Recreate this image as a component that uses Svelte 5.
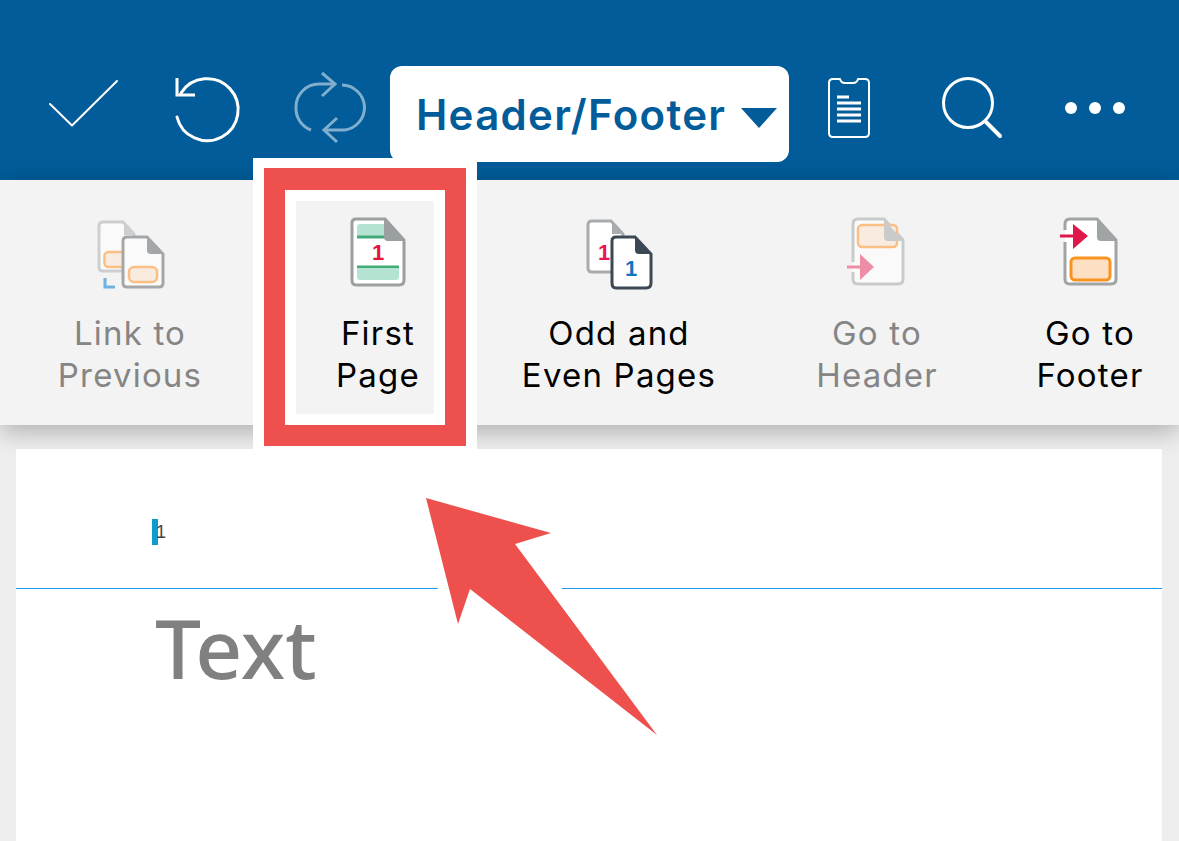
<script>
  const blue = '#015c99';
</script>

<div class="page">
  <header class="top">
    <div class="row">
      <div class="slot">
        <svg viewBox="45 76 78 66" width="78" height="66"><path d="M50 110 L72 131.5 L117 87" class="ln2" /></svg>
      </div>
      <div class="slot">
        <svg viewBox="168 70 78 76" width="78" height="76">
          <path d="M177 117 A31 31 0 1 0 181 93" class="ln3" />
          <path d="M177 78 V95 H195" class="ln3 butt" />
        </svg>
      </div>
      <div class="slot dim">
        <svg viewBox="291 70 78 76" width="78" height="76">
          <path d="M335 84 H319 A23 23 0 0 0 296 107 A23 23 0 0 0 311 130" class="ln3 butt" />
          <path d="M322 73 L335 84 L322 96" class="ln3 butt" />
          <path d="M342 85 A23 23 0 0 1 364.500 107 A23 23 0 0 1 345 130 H324" class="ln3 butt" />
          <path d="M337 118 L324 130 L337 142" class="ln3 butt" />
        </svg>
      </div>
      <button class="drop">
        <span>Header/Footer</span>
        <svg viewBox="0 0 36 20" width="36" height="20"><path d="M0 0 H36 L18 20 Z" fill={blue} /></svg>
      </button>
      <div class="slot">
        <svg viewBox="810 70 78 76" width="78" height="76">
          <path d="M833 79 H840 Q841 83 845 83 H853 Q857 83 858 79 H865 Q869 79 869 83 V133 Q869 137 865 137 H833 Q829 137 829 133 V83 Q829 79 833 79 Z" class="ln2" />
          <path d="M837 97 H849 M837 103 H861 M837 109 H861 M837 115 H861 M837 121 H861" class="ln3 butt" />
        </svg>
      </div>
      <div class="slot">
        <svg viewBox="933 70 78 76" width="78" height="76">
          <circle cx="968" cy="103" r="24.500" class="ln3" />
          <path d="M986 122 L1000 136" class="ln3 thick" />
        </svg>
      </div>
      <div class="slot">
        <svg viewBox="1056 70 78 76" width="78" height="76">
          <circle cx="1071" cy="108" r="6" fill="#fff" />
          <circle cx="1095" cy="108" r="6" fill="#fff" />
          <circle cx="1119" cy="108" r="6" fill="#fff" />
        </svg>
      </div>
    </div>
  </header>

  <nav class="ribbon">
    <div class="item off">
      <svg viewBox="90 215 80 80" width="80" height="80">
        <path d="M103 222 H123 L134 234 V271 H103 Q99 271 99 267 V226 Q99 222 103 222 Z" fill="#fafafa" stroke="#cdcfcf" stroke-width="3" />
        <path d="M124 222 L135 235 H124 Z" fill="#cdcfcf" />
        <rect x="104.500" y="252" width="22" height="15" rx="4" fill="#f9ebdf" stroke="#fbbf85" stroke-width="2.500" />
        <path d="M105 278 V287 H115" fill="none" stroke="#6fb1e0" stroke-width="3" />
        <path d="M127 237 H147 L163 254 V283 Q163 287 159 287 H127 Q123 287 123 283 V241 Q123 237 127 237 Z" fill="#fafafa" stroke="#a3a7a9" stroke-width="3" />
        <path d="M147 237 L163 254 H151 Q147 254 147 250 Z" fill="#a3a7a9" />
        <rect x="129" y="267" width="28" height="15" rx="5" fill="#f9ebdf" stroke="#fbbf85" stroke-width="2.500" />
      </svg>
      <span>Link to<br />Previous</span>
    </div>
    <div class="item">
      <svg viewBox="338 215 80 80" width="80" height="80">
        <path d="M356 219 H385 L404 240 V280 Q404 285 399 285 H356 Q352 285 352 280 V223 Q352 219 356 219 Z" fill="#fff" stroke="#9b9fa0" stroke-width="3" />
        <path d="M360 224 H384 V236 H357 V227 Q357 224 360 224 Z" fill="#b5e3d1" />
        <path d="M357 237 H385" stroke="#43ab78" stroke-width="3" />
        <path d="M357 267 H399" stroke="#43ab78" stroke-width="3" />
        <path d="M357 268 H399 V277 Q399 280 396 280 H360 Q357 280 357 277 Z" fill="#b5e3d1" />
        <path d="M384 219 L404 241 H388 Q384 241 384 237 Z" fill="#9b9fa0" />
        <text x="378" y="260" class="num" fill="#e8123c">1</text>
      </svg>
      <span>First<br />Page</span>
    </div>
    <div class="item">
      <svg viewBox="579 215 80 80" width="80" height="80">
        <path d="M592 221 H611 L623 234 V272 H592 Q588 272 588 268 V225 Q588 221 592 221 Z" fill="#fff" stroke="#a9acae" stroke-width="3" />
        <path d="M612 221 L623 234 H612 Z" fill="#a9acae" />
        <text x="604" y="260" class="num" fill="#e8174f">1</text>
        <path d="M616 237 H635 L651 254 V283 Q651 288 646 288 H616 Q612 288 612 283 V241 Q612 237 616 237 Z" fill="#fff" stroke="#3c4854" stroke-width="3" />
        <path d="M635 237 L651 254 H639 Q635 254 635 250 Z" fill="#3c4854" />
        <text x="631" y="276" class="num" fill="#0f75bc">1</text>
      </svg>
      <span>Odd and<br />Even Pages</span>
    </div>
    <div class="item off">
      <svg viewBox="837 215 80 80" width="80" height="80">
        <path d="M853 262 V224 Q853 219 858 219 H884 L903 240 V279 Q903 284 898 284 H858 Q853 284 853 279 V272" fill="#fafafa" stroke="#c9cbcb" stroke-width="3" />
        <rect x="858" y="225" width="39" height="22" rx="4" fill="#f9ebdf" stroke="#fbbf85" stroke-width="2.500" />
        <path d="M884 219 L903 241 H888 Q884 241 884 237 Z" fill="#c9cbcb" />
        <path d="M847 267 H862" stroke="#ee8ea6" stroke-width="3" />
        <path d="M860 254 L874 267 L860 280 Z" fill="#ee8ea6" />
      </svg>
      <span>Go to<br />Header</span>
    </div>
    <div class="item on">
      <svg viewBox="1050 215 80 80" width="80" height="80">
        <path d="M1065 230 V224 Q1065 219 1070 219 H1097 L1116 240 V279 Q1116 284 1111 284 H1070 Q1065 284 1065 279 V242" fill="#fff" stroke="#a1a4a5" stroke-width="3" />
        <path d="M1097 219 L1116 241 H1101 Q1097 241 1097 237 Z" fill="#a1a4a5" />
        <rect x="1071" y="258" width="39" height="22" rx="4" fill="#fddfc3" stroke="#f7931e" stroke-width="3" />
        <path d="M1060 236 H1075" stroke="#e0174a" stroke-width="3" />
        <path d="M1073 224 L1088 236 L1073 249 Z" fill="#e0174a" />
      </svg>
      <span>Go to<br />Footer</span>
    </div>
  </nav>

  <main class="sheet">
    <div class="head">
      <span class="caret"></span><span class="pg">1</span>
    </div>
    <div class="body">Text</div>
  </main>

  <div class="frame"><div class="red"><div class="gap"></div></div></div>

  <svg class="arrow" viewBox="0 0 1179 841" width="1179" height="841">
    <path d="M426 498 L551 533 L515 544 L657 735 L470 589 L458 624 Z" />
  </svg>
</div>

<style>
  :global(body) { margin: 0; background: #eeeeee; }
  .page {
    position: relative;
    width: 1179px;
    height: 841px;
    overflow: hidden;
    background: #eeeeee;
    font-family: Inter, "Liberation Sans", sans-serif;
  }
  .top { height: 180px; background: #015c99; box-sizing: border-box; padding-top: 66px; }
  .row { display: flex; align-items: flex-start; padding-left: 22.5px; }
  .slot { width: 123px; height: 84px; display: flex; justify-content: center; align-items: flex-start; padding-top: 4px; box-sizing: border-box; }
  .slot svg { display: block; }
  .dim { opacity: .5; }
  .ln2 { fill: none; stroke: #fff; stroke-width: 2; stroke-linecap: round; stroke-linejoin: round; }
  .ln3 { fill: none; stroke: #fff; stroke-width: 3; stroke-linecap: round; }
  .butt { stroke-linecap: butt; }
  .thick { stroke-width: 4; }
  .drop {
    width: 399px;
    height: 96px;
    margin-left: -1.500px;
    margin-right: -1.500px;
    border: 0;
    border-radius: 12px;
    background: #fff;
    color: #015c99;
    font: 600 42px Inter, "Liberation Sans", sans-serif;
    letter-spacing: 1.300px;
    display: flex;
    align-items: center;
    padding: 0 12px 0 26px;
    box-sizing: border-box;
    justify-content: space-between;
  }
  .drop svg { margin-top: 8px; }
  .ribbon {
    height: 245px;
    background: #f3f3f3;
    display: grid;
    grid-template-columns: 260px 236px 246px 270px 156px;
    box-shadow: 0 6px 24px rgba(0, 0, 0, .28);
  }
  .item { display: flex; flex-direction: column; align-items: center; padding-top: 35px; color: #000; font-size: 33px; letter-spacing: 1.200px; line-height: 42px; text-align: center; white-space: nowrap; }
  .item svg { display: block; margin-bottom: 17px; }
  .off { color: #858585; }
  .num { font: 700 22px "Liberation Sans", sans-serif; text-anchor: middle; letter-spacing: 0; }
  .sheet {
    position: relative;
    margin: 24px 17px 0 16px;
    height: 392px;
    background: #fff;
  }
  .head { height: 140px; border-bottom: 1px solid #1e9bf0; box-sizing: border-box; padding: 70px 0 0 136px; display: flex; align-items: flex-start; }
  .caret { width: 6px; height: 26px; background: #0e9ccb; flex: none; }
  .pg { font: 18px/26px "Liberation Sans", sans-serif; color: #444; margin-left: -2px; }
  .body { font: 500 82px/1 "Noto Sans", sans-serif; color: #808080; padding: 17px 0 0 139px; }
  .frame {
    position: absolute;
    left: 253px;
    top: 158px;
    width: 224px;
    height: 292px;
    box-sizing: border-box;
    border: 11px solid #fff;
    border-top-width: 10px;
    border-bottom-width: 4px;
  }
  .red { height: 100%; box-sizing: border-box; border: 21px solid #ed504d; border-top-width: 22px; }
  .gap { height: 100%; box-sizing: border-box; border: 11px solid #fff; }
  .arrow { position: absolute; left: 0; top: 0; pointer-events: none; }
  .arrow path { fill: #ed504d; stroke: #fff; stroke-width: 22; stroke-linejoin: round; paint-order: stroke; }
</style>
